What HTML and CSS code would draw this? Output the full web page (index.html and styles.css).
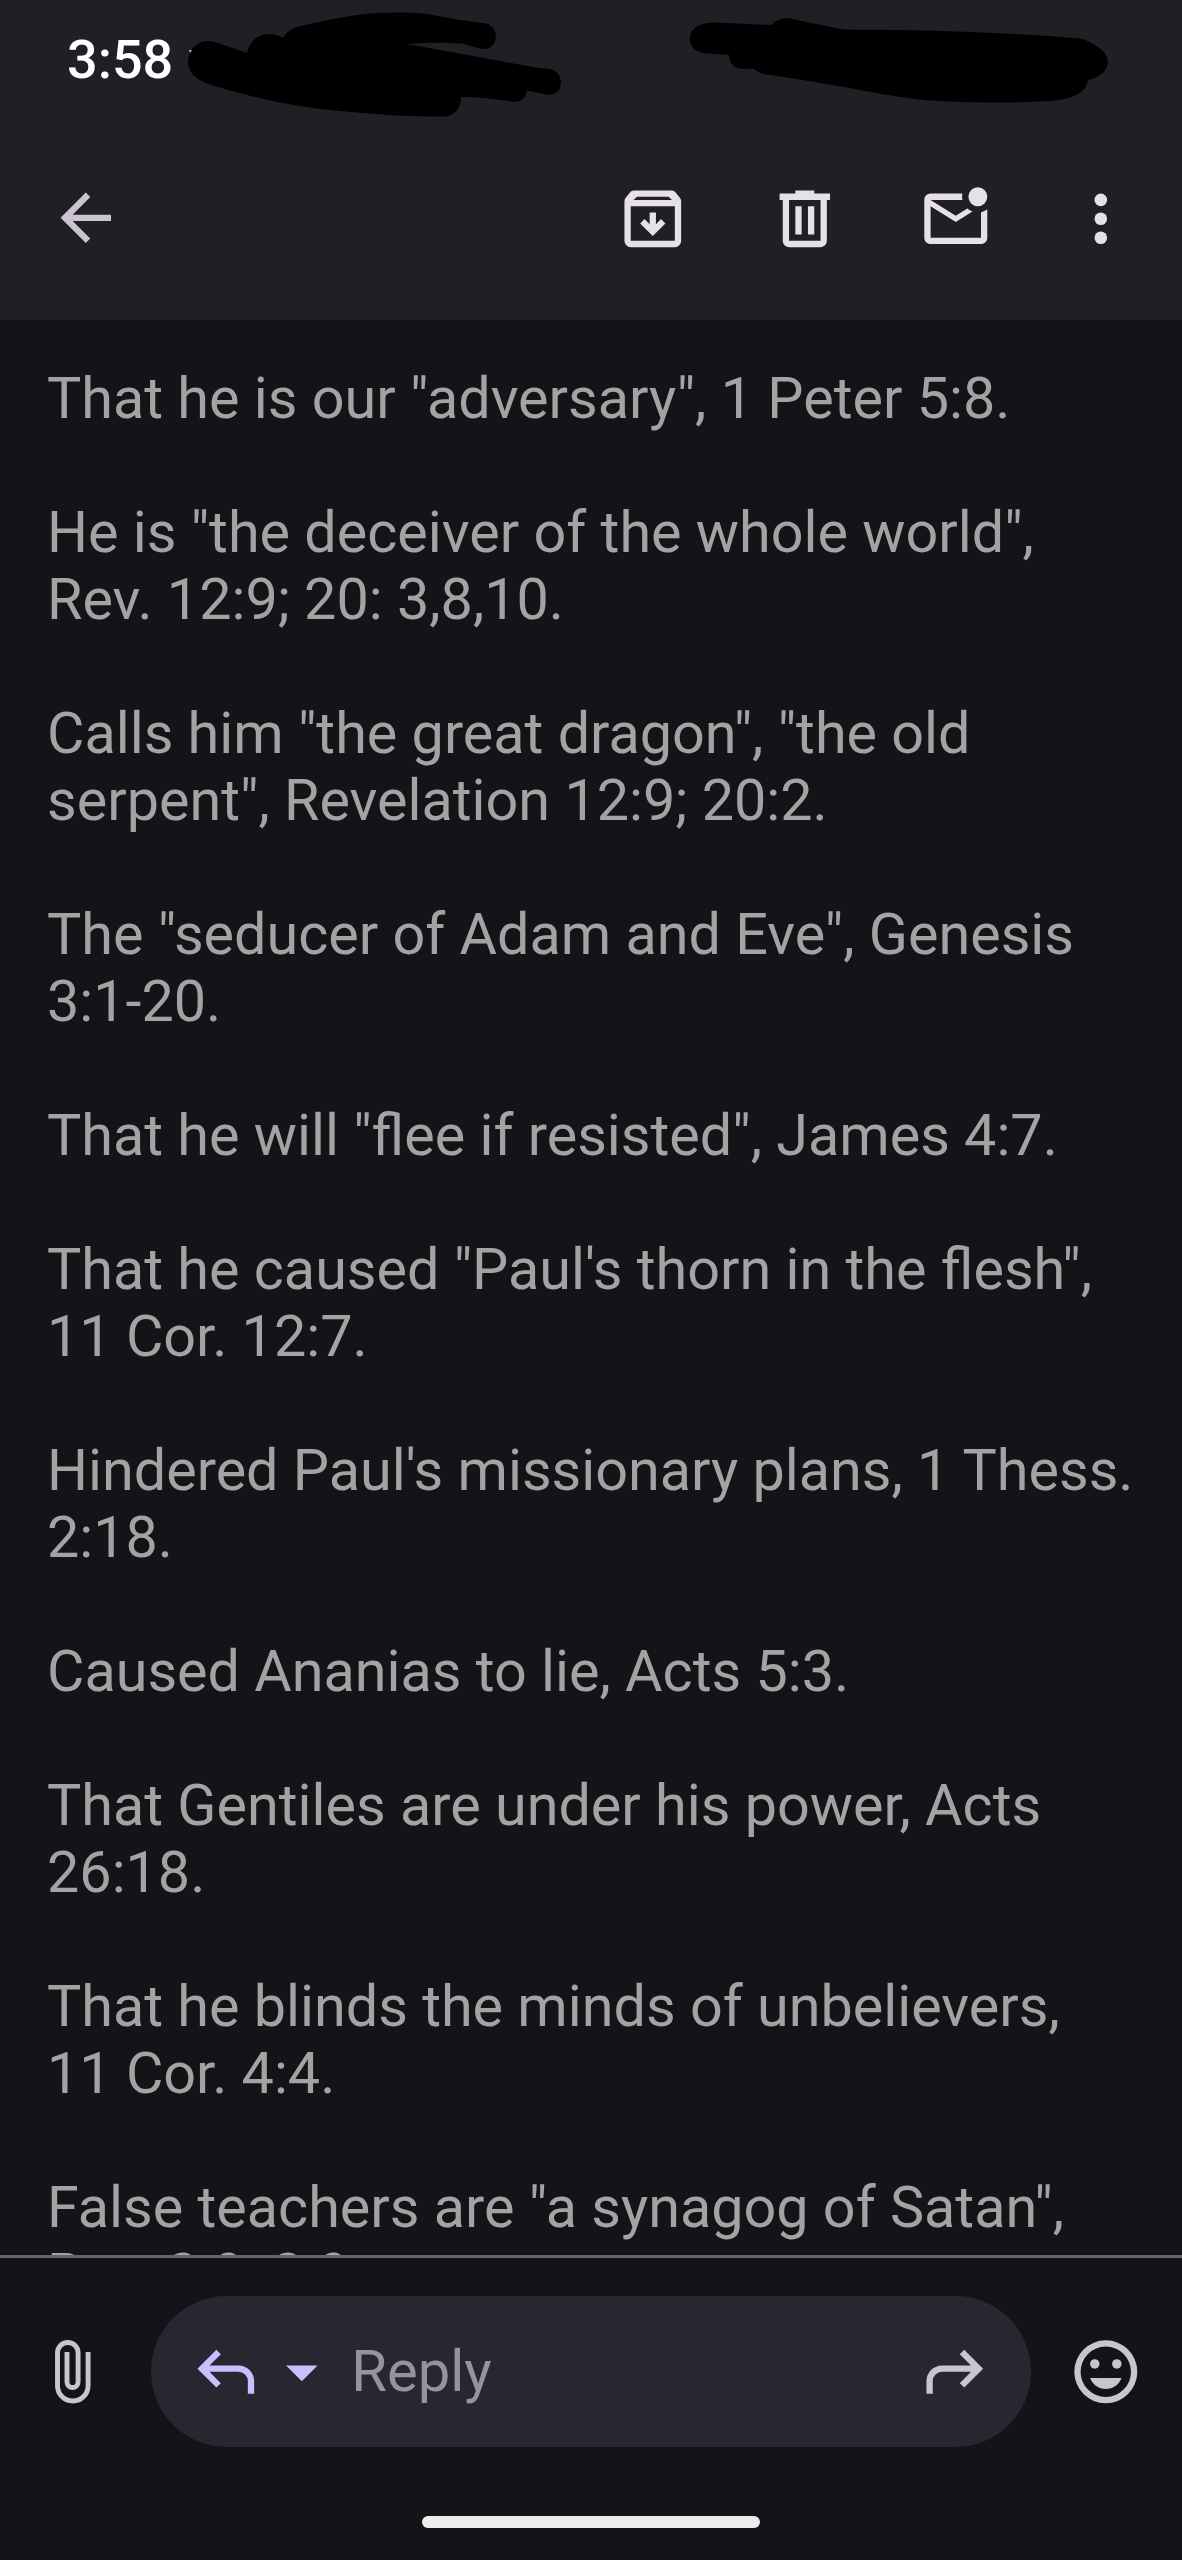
FILE: index.html
```html
<!DOCTYPE html>
<html lang="en">
<head>
    <meta charset="UTF-8">
    <meta name="viewport" content="width=device-width, initial-scale=1.0">
    <title>Mail</title>
    <link rel="stylesheet" href="styles.css">
</head>
<body>

<header class="top">
    <div class="status-bar">
        <span class="time">3:58</span>
        <svg class="scribble" viewBox="0 0 1182 130">
            <path d="M188 63C188 48 199 40 210 41Q217 42 247 53C249 42 258 34 268 34Q276 34 283 38Q287 30 297 27Q330 19 360 14.500Q400 11 427 14Q445 17 460 20L486 23.500C500 27 499 49 484 49Q480 49 462 43.500Q440 42 407 44L536 67.500L552 69.500C565 74 564 95 548 95L527 90.500Q525 102 514 102Q485 97 461 97Q461 113 446 116.500Q400 117 340 111Q280 106 211 85Q189 78 188 63Z"/>
            <path d="M690 38C690 28 700 22.500 716 22.500L772 25Q777 18 788 18Q805 22 844 29.500Q980 30 1080 38.500Q1088 40 1098 47Q1108 54 1108 62Q1106 76 1088 80Q1086 98 1051 101Q1000 104 938 101Q905 99 860 90Q800 79 763 74Q757 72 754 69L742 69Q729 67 729 55L703 53Q690 51 690 38Z"/>
            <path class="speck" d="M189 50h3l-2 3z"/>
        </svg>
    </div>
    <nav class="toolbar">
        <svg class="icon back" viewBox="0 0 24 24"><path d="M20 11H7.830l5.590-5.590L12 4l-8 8 8 8 1.410-1.410L7.830 13H20z"/></svg>
        <svg class="icon archive" viewBox="0 0 24 24"><path fill-rule="evenodd" d="M5 21q-.825 0-1.413-.587T3 19V6.500q0-.4.120-.7t.350-.6L4.700 3.700q.275-.35.587-.525T6 3h12q.4 0 .713.175T19.300 3.700l1.230 1.500q.23.300.350.600t.120.700V19q0 .825-.587 1.413T19 21zM5.900 6h12.200L17 5H7zM5 8v11h14V8zM12 17.500l4-4-1.400-1.400-1.600 1.600V10h-2v3.700l-1.600-1.600L8 13.500z"/></svg>
        <svg class="icon trash" viewBox="0 0 24 24"><path fill-rule="evenodd" d="M9 3v1H4v2h1v13c0 1.100.9 2 2 2h10c1.100 0 2-.9 2-2V6h1V4h-5V3zM7 6h10v13H7zM9 8v9h2V8zM13 8v9h2V8z"/></svg>
        <svg class="icon unread" viewBox="0 0 24 24"><path d="M22 9v9c0 1.100-.9 2-2 2H4c-1.100 0-2-.9-2-2V6c0-1.100.9-2 2-2h10.100a5 5 0 0 0 0 2H4l8 5 3.670-2.290c.47.430 1.020.760 1.630.980L12 13 4 8v10h16V9.900c.74-.15 1.420-.48 2-.9z"/><circle cx="19" cy="5" r="3"/></svg>
        <svg class="icon more" viewBox="0 0 24 24"><circle cx="12" cy="6" r="2"/><circle cx="12" cy="12" r="2"/><circle cx="12" cy="18" r="2"/></svg>
    </nav>
</header>

<main class="message">
    <p>That he is our "adversary", 1 Peter 5:8.</p>
    <p>He is "the deceiver of the whole world",<br>Rev. 12:9; 20: 3,8,10.</p>
    <p>Calls him "the great dragon", "the old<br>serpent", Revelation 12:9; 20:2.</p>
    <p>The "seducer of Adam and Eve", Genesis<br>3:1-20.</p>
    <p>That he will "flee if resisted", James 4:7.</p>
    <p>That he caused "Paul's thorn in the flesh",<br>11 Cor. 12:7.</p>
    <p>Hindered Paul's missionary plans, 1 Thess.<br>2:18.</p>
    <p>Caused Ananias to lie, Acts 5:3.</p>
    <p>That Gentiles are under his power, Acts<br>26:18.</p>
    <p>That he blinds the minds of unbelievers,<br>11 Cor. 4:4.</p>
    <p>False teachers are "a synagog of Satan",<br>Rev. 2:9; 3:9.</p>
</main>

<footer class="bottom">
    <div class="reply-row">
        <svg class="clip" viewBox="0 0 36 64"><path d="M33.100 12V45.700a15.300 15.300 0 0 1-30.600 0V12.800a10.300 10.300 0 0 1 20.600 0V42a5.550 5.550 0 0 1-11.100 0V12"/></svg>
        <div class="reply-box">
            <svg class="icon reply" viewBox="0 0 24 24"><path d="M19 19v-4q0-1.250-.875-2.125T16 12H6.825l3.600 3.600L9 17l-6-6 6-6 1.425 1.400-3.600 3.600H16q2.075 0 3.538 1.463T21 15v4z"/></svg>
            <svg class="icon caret" viewBox="0 0 24 24"><path d="M7 10l5 5 5-5z"/></svg>
            <span class="reply-text">Reply</span>
            <svg class="icon forward" viewBox="0 0 24 24"><path d="M5 19v-4q0-1.250.875-2.125T8 12h9.175l-3.600 3.600L15 17l6-6-6-6-1.425 1.400 3.600 3.600H8q-2.075 0-3.537 1.463T3 15v4z"/></svg>
        </div>
        <svg class="icon emoji" viewBox="0 0 24 24"><path fill-rule="evenodd" d="M12 2a10 10 0 1 0 0 20 10 10 0 0 0 0-20zM12 4a8 8 0 1 1 0 16 8 8 0 0 1 0-16z"/><circle cx="8.500" cy="9.500" r="1.500"/><circle cx="15.500" cy="9.500" r="1.500"/><path d="M7 14h10c-.8 2.100-2.700 3.500-5 3.500S7.800 16.100 7 14z"/></svg>
    </div>
    <div class="home-bar"></div>
</footer>

</body>
</html>
```
FILE: styles.css
```css
* {
    box-sizing: border-box;
}

body {
    display: flex;
    flex-direction: column;
    width: 1182px;
    height: 2560px;
    margin: 0;
    overflow: hidden;
    background-color: #141318;
    font-family: Roboto, sans-serif;
}

svg {
    display: block;
    flex-shrink: 0;
}

.icon {
    width: 75.6px;
    height: 75.6px;
    fill: #e6e0e9;
}

/* Status bar and toolbar */
.top {
    height: 320px;
    flex-shrink: 0;
    background-color: #211f26;
}

.status-bar {
    position: relative;
    height: 130px;
    padding: 28px 0 0 67px;
}

.time {
    font-size: 54px;
    font-weight: 500;
    line-height: 64px;
    color: #ffffff;
}

.scribble {
    position: absolute;
    top: 0;
    left: 0;
    width: 1182px;
    height: 130px;
    fill: #000000;
}

.scribble .speck {
    fill: #b0b0b4;
}

.toolbar {
    display: flex;
    align-items: center;
    height: 178px;
    padding: 0 43px 0 48px;
}

.back {
    margin-right: auto;
    margin-bottom: 2px;
    fill: #cac4d0;
}

.archive,
.trash {
    margin-right: 75.6px;
}

.unread {
    margin-right: 70px;
}

/* Message text */
.message {
    height: 1935px;
    flex-shrink: 0;
    overflow: hidden;
    padding: 45px 0 0 47px;
    font-size: 57.5px;
    line-height: 67px;
    color: #a3a3a3;
    white-space: nowrap;
}

.message p {
    margin: 0 0 67px;
}

/* Reply bar */
.bottom {
    flex: 1;
    border-top: 3px solid #636468;
}

.reply-row {
    display: flex;
    align-items: center;
    height: 151px;
    margin-top: 38px;
}

.clip {
    width: 36px;
    height: 64px;
    margin-left: 55px;
    fill: none;
    stroke: #cac4d0;
    stroke-width: 4.9;
}

.reply-box {
    display: flex;
    align-items: center;
    width: 880px;
    height: 151px;
    margin-left: 60px;
    padding: 0 38.5px 0 37px;
    border-radius: 76px;
    background-color: #282630;
}

.reply {
    fill: #c8bfff;
}

.caret {
    fill: #c8bfff;
}

.reply-text {
    margin-left: 12px;
    font-size: 58px;
    line-height: 67px;
    color: #97939c;
}

.forward {
    margin-left: auto;
    fill: #cac4d0;
}

.emoji {
    margin-left: 37px;
    fill: #cac4d0;
}

.home-bar {
    width: 338px;
    height: 12px;
    margin: 69px auto 0;
    border-radius: 6px;
    background-color: #ececec;
}
```
